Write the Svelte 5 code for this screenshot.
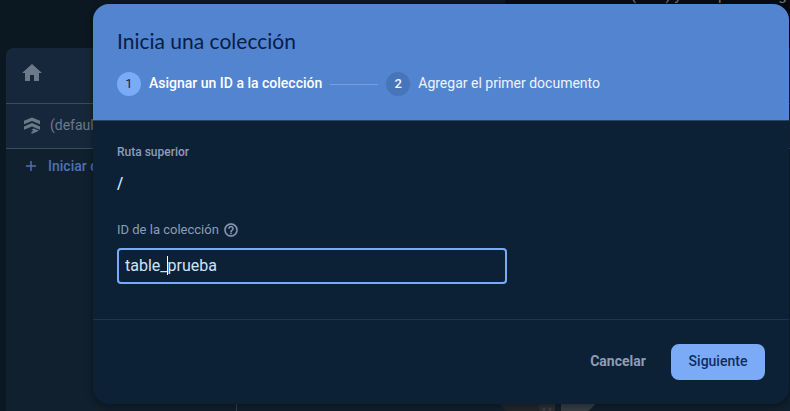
<script>
  let collectionId = $state('table_prueba');
</script>

<div class="page">
  <div class="topbar"><div class="promo">(beta) y crea panel de g</div></div>
  <main class="panel">
    <div class="home row">
      <svg width="24" height="24" viewBox="0 0 24 24" aria-hidden="true"><path d="M10 20v-6h4v6h5v-8h3L12 3 2 12h3v8z" fill="currentColor" /></svg>
    </div>
    <div class="db row">
      <svg width="18" height="18" viewBox="0 0 18 18" aria-hidden="true">
        <path d="M1 4.800 9 1.500l8 3.300v3.400L9 4.900 1 8.200zM1 10.400 9 7l8 3.400v3.400L9 10.400l-8 3.400zM8.500 13.500l2.500-1 5 2.200-7.500 3.300v-2.300l2-1z" fill="currentColor" />
      </svg>
      <span>(default)</span>
    </div>
    <div class="column">
      <a href="#iniciar">
        <svg width="12" height="12" viewBox="0 0 12 12" aria-hidden="true"><path d="M6 1v10M1 6h10" stroke="currentColor" stroke-width="1.500" /></svg>
        <span>Iniciar colección</span>
      </a>
    </div>
  </main>
  <svg class="art" width="100" height="11" viewBox="0 0 100 11" aria-hidden="true">
    <path d="M0 0h40v11H8Q2 8 0 0z" fill="#22272f" /><path d="M40 0h16v11H40z" fill="#2b2f37" /><path d="M62 0h37q-4 7-10 11H62z" fill="#383e48" />
    <circle cx="45" cy="9" r="1.500" fill="#41444a" /><circle cx="51" cy="9" r="1.500" fill="#41444a" />
  </svg>

  <div class="overlay">
    <form class="dialog" onsubmit={(e) => e.preventDefault()}>
      <header>
        <h1>Inicia una colección</h1>
        <ol>
          <li class="current"><span class="num">1</span><span class="step">Asignar un ID a la colección</span></li>
          <li class="line" aria-hidden="true"></li>
          <li><span class="num">2</span><span class="step">Agregar el primer documento</span></li>
        </ol>
      </header>
      <section>
        <div class="label">Ruta superior</div>
        <div class="path">/</div>
        <div class="label idlabel">
          <label for="cid">ID de la colección</label>
          <svg width="16" height="16" viewBox="0 0 24 24" aria-hidden="true"><path d="M11 18h2v-2h-2v2zm1-16C6.480 2 2 6.480 2 12s4.480 10 10 10 10-4.480 10-10S17.520 2 12 2zm0 18c-4.410 0-8-3.590-8-8s3.590-8 8-8 8 3.590 8 8-3.590 8-8 8zm0-14c-2.210 0-4 1.790-4 4h2c0-1.100.9-2 2-2s2 .9 2 2c0 2-3 1.750-3 5h2c0-2.250 3-2.500 3-5 0-2.210-1.790-4-4-4z" fill="currentColor" stroke="currentColor" stroke-width=".4" /></svg>
        </div>
        <div class="field">
          <input id="cid" type="text" bind:value={collectionId} autocomplete="off" spellcheck="false" />
          <i class="caret"></i>
        </div>
      </section>
      <footer>
        <button type="button" class="cancel">Cancelar</button>
        <button type="submit" class="next">Siguiente</button>
      </footer>
    </form>
  </div>
</div>

<style>
  :global(body) { background: #0b1822; }
  .page {
    position: relative;
    box-sizing: border-box;
    height: 100vh;
    overflow: hidden;
    padding-left: 6px;
    display: flex;
    flex-direction: column;
    font: 14px/20px Roboto, sans-serif;
    background: #0b1822;
  }
  .topbar { height: 48px; flex: none; display: flex; justify-content: flex-end; }
  .promo {
    box-sizing: border-box;
    width: 285px;
    height: 64px;
    padding-left: 126px;
    background: #080b11;
    color: #777b80;
    font-size: 15px;
    line-height: 20px;
    white-space: nowrap;
    margin-top: -15px;
  }
  .panel {
    flex: 1;
    display: flex;
    flex-direction: column;
    background: #11202e;
    border-radius: 8px 0 0 0;
    overflow: hidden;
  }
  .row {
    box-sizing: border-box;
    display: flex;
    align-items: center;
    background: #17273b;
    border-bottom: 1px solid #3d4b5c;
    color: #6c798a;
  }
  .home { height: 56px; padding: 0 14px 6px; }
  .db { height: 45px; padding: 0 17px 2px; gap: 9px; }
  .column { flex: 1; width: 230px; border-right: 1px solid #343e49; }
  .column a {
    display: flex;
    align-items: center;
    gap: 11px;
    padding: 7px 19px;
    color: #4c72b4;
    font-weight: 500;
    text-decoration: none;
  }
  .art { position: absolute; left: 499px; bottom: 0; }
  .overlay { position: absolute; inset: 0; padding: 4px 1px 7px 93px; }
  .dialog {
    border-radius: 16px;
    overflow: hidden;
    background: #0c2135;
    box-shadow: 0 2px 6px 1px #0005;
  }
  header { padding: 24px 24px; background: #5384d0; border-bottom: 1px solid #294562; }
  h1 { margin: 0 0 18px; font: 400 21px/26px Lato, sans-serif; color: #062044; }
  ol { display: flex; align-items: center; margin: 0; padding: 0; list-style: none; color: #eef4ff; }
  li { display: flex; align-items: center; gap: 8px; white-space: nowrap; }
  .current { color: #fff; font-weight: 500; }
  .step { padding-bottom: 2px; }
  .num {
    width: 24px;
    height: 24px;
    border-radius: 50%;
    background: #4676b9;
    font-weight: 500;
    font-size: 13px;
    line-height: 24px;
    text-align: center;
  }
  .current .num { background: #7baaf7; color: #10254a; font-weight: 400; }
  .line { width: 48px; height: 1px; margin: 0 8px; background: #7b9fdb; }
  section { padding: 21px 24px 35px; color: #d1e2fb; }
  .label { font-size: 12px; line-height: 20px; font-weight: 500; color: #8c9db8; }
  .path { font-size: 16px; line-height: 24px; padding: 10px 0 24px; font-weight: 500; }
  .idlabel { display: flex; align-items: center; gap: 4px; font-size: 13px; font-weight: 400; }
  .field { position: relative; max-width: 390px; margin-top: 8px; }
  input {
    box-sizing: border-box;
    display: block;
    width: 100%;
    height: 36px;
    padding: 0 6px 2px;
    border: 2px solid #7baaf7;
    border-radius: 4px;
    outline: 0;
    background: transparent;
    color: #d1e2fb;
    font: 16px Roboto, sans-serif;
  }
  .caret { position: absolute; left: 50px; top: 8px; width: 1px; height: 19px; background: #fff; }
  footer { display: flex; justify-content: flex-end; gap: 8px; padding: 24px; border-top: 1px solid #1e354b; }
  button {
    height: 36px;
    min-width: 94px;
    padding: 0 16px 2px;
    border: 0;
    border-radius: 8px;
    font: 500 14px/20px Roboto, sans-serif;
  }
  .cancel { background: transparent; color: #8c9db8; font-weight: 700; min-width: 90px; }
  .next { background: #7baaf7; color: #0e2d61; }
</style>
